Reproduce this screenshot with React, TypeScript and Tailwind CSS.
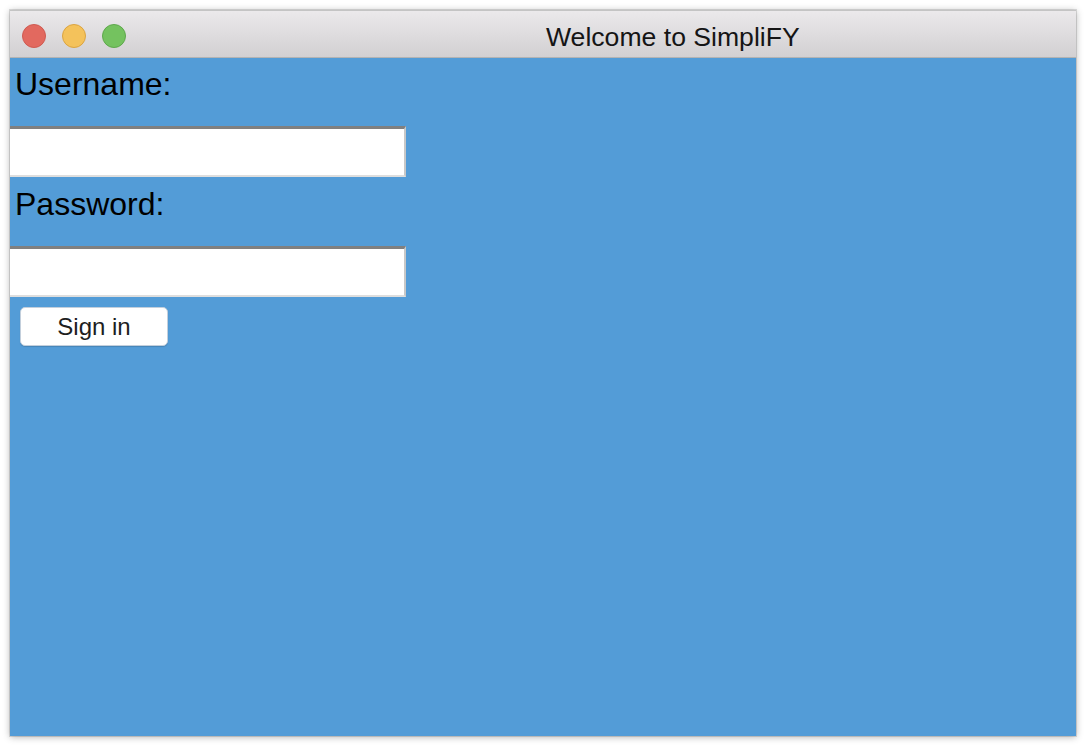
export default function App() {
  return (
    <div className="min-h-screen bg-white p-[10px]" style={{ fontFamily: '"Liberation Sans", Arial, sans-serif' }}>
      <div className="flex h-[726px] w-[1066px] flex-col shadow-[0_0_0_1px_rgba(0,0,0,0.12),0_1px_7px_rgba(0,0,0,0.3)]">
        {/* title bar */}
        <div className="flex h-[48px] items-center border-t border-b border-t-[#c4c4c4] border-b-[#b3b3b3] bg-gradient-to-b from-[#ebe9eb] to-[#d2d0d2] pl-[12px]">
          <div className="mt-[4px] flex gap-[16px]">
            <span className="block h-[24px] w-[24px] rounded-full border border-[#cf5a51] bg-[#e2695f]" />
            <span className="block h-[24px] w-[24px] rounded-full border border-[#dba441] bg-[#f4c25b]" />
            <span className="block h-[24px] w-[24px] rounded-full border border-[#5ea84c] bg-[#74c25f]" />
          </div>
          <div className="ml-[420px] pt-[6px] text-[26.6px] leading-[26px] text-[#151515]">Welcome to SimpliFY</div>
        </div>

        {/* content */}
        <div className="flex flex-1 flex-col items-start bg-[#539cd7]">
          <label className="mt-[10px] pl-[5px] text-[32px] leading-[32px] text-black">Username:</label>
          <input
            type="text"
            className="mt-[26px] h-[51px] w-[396px] border-t-[3px] border-r-2 border-b-2 border-t-[#808080] border-r-[#c8c8c8] border-b-[#dedede] bg-white px-2 text-[20px] outline-none"
          />
          <label className="mt-[11px] pl-[5px] text-[32px] leading-[32px] text-black">Password:</label>
          <input
            type="password"
            className="mt-[26px] h-[51px] w-[396px] border-t-[3px] border-r-2 border-b-2 border-t-[#808080] border-r-[#c8c8c8] border-b-[#dedede] bg-white px-2 text-[20px] outline-none"
          />
          <button className="mt-[10px] ml-[10px] h-[39px] w-[148px] rounded-[5px] border border-[#c3cfdc] bg-white text-[24px] leading-none text-[#1e1e1e] shadow-[0_1px_1px_rgba(0,0,0,0.15)]">
            Sign in
          </button>
        </div>
      </div>
    </div>
  );
}
